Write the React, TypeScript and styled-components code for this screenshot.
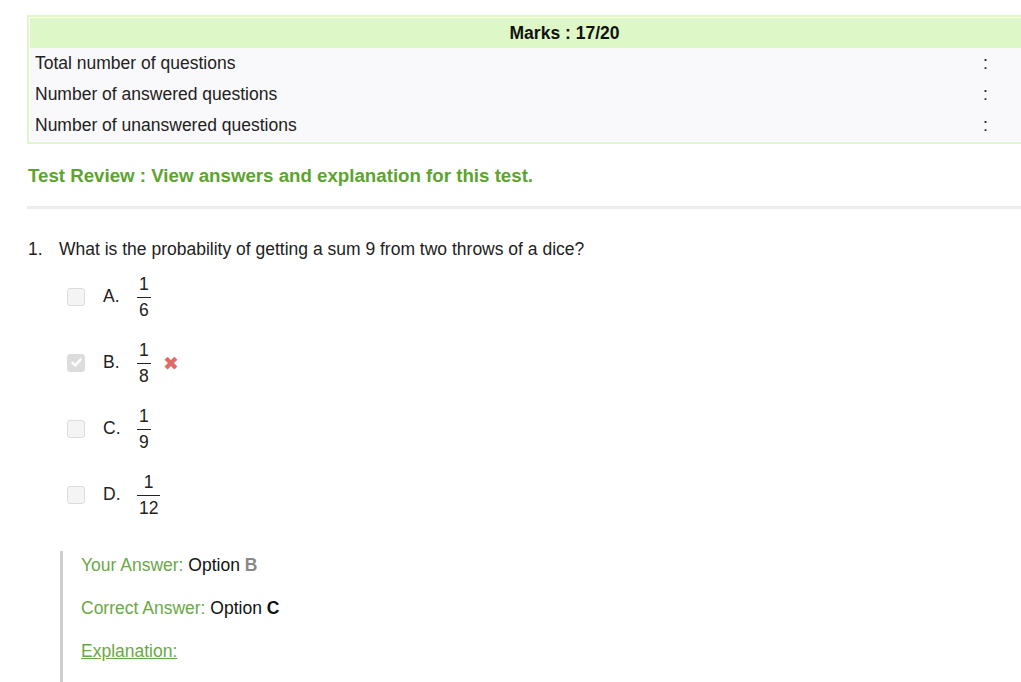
import React from "react";
import styled, { createGlobalStyle } from "styled-components";

const Global = createGlobalStyle`
  html, body { margin: 0; padding: 0; background: #fff; overflow: hidden; }
  body { font-family: "Liberation Sans", Arial, sans-serif; color: #111; }
`;

const Page = styled.div`
  width: 1021px;
  height: 682px;
  overflow: hidden;
  padding: 15px 0 0 27px;
  box-sizing: border-box;
`;

const ScoreTable = styled.div`
  width: 1075px;
  border: 2px solid #dff6cc;
  padding: 1px;
  box-sizing: border-box;
  display: flex;
  flex-direction: column;
`;

const HeaderRow = styled.div`
  height: 30px;
  background: #ddf7c6;
  display: flex;
  align-items: center;
  justify-content: center;
  font-weight: bold;
  font-size: 17.5px;
  color: #111;
`;

const StatRow = styled.div`
  height: 31px;
  background: #f9f9fb;
  display: grid;
  grid-template-columns: 948px 20px 1fr;
  align-items: center;
  font-size: 17.5px;
  color: #222;
  padding-left: 5px;
`;

const Heading = styled.h2`
  margin: 21px 0 0 1px;
  font-size: 18.7px;
  line-height: 22px;
  font-weight: bold;
  color: #5ca42f;
`;

const Rule = styled.div`
  height: 3px;
  background: #ececec;
  margin-top: 19px;
`;

const Question = styled.div`
  display: flex;
  margin: 30px 0 0 1px;
  font-size: 17.5px;
  line-height: 20px;
  color: #222;
`;

const QNum = styled.span`
  width: 31px;
`;

const Options = styled.div`
  display: flex;
  flex-direction: column;
  gap: 27px;
  margin: 18px 0 0 40px;
`;

const Option = styled.div`
  display: flex;
  align-items: center;
  height: 39px;
  font-size: 17.5px;
  color: #222;
`;

const Box = styled.span<{ $checked?: boolean }>`
  width: 18px;
  height: 18px;
  border: 1px solid #dcdcdc;
  border-radius: 3px;
  background: ${(p) => (p.$checked ? "#dcdcdc" : "#f4f4f4")};
  box-sizing: border-box;
  display: flex;
  align-items: center;
  justify-content: center;
  margin-right: 18px;
`;

const Letter = styled.span`
  width: 34px;
`;

const Frac = styled.span`
  display: inline-flex;
  flex-direction: column;
  align-items: center;
  font-size: 17.5px;
  line-height: 20px;
`;

const Num = styled.span`
  padding: 0 2px 3px;
  border-bottom: 1px solid #222;
  align-self: stretch;
  text-align: center;
`;

const Den = styled.span`
  padding: 2px 2px 0;
`;

const Cross = styled.span`
  color: #e06a6a;
  font-size: 19px;
  margin-left: 12px;
  margin-top: 2px;
`;

const AnswerBlock = styled.div`
  margin: 37px 0 0 33px;
  border-left: 3px solid #cfcfcf;
  padding: 4px 0 30px 18px;
  display: flex;
  flex-direction: column;
  gap: 22px;
  font-size: 17.5px;
  line-height: 21px;
`;

const Line = styled.div`
  color: #111;
`;

const Label = styled.span`
  color: #6aa847;
`;

const OptLetter = styled.b<{ $muted?: boolean }>`
  color: ${(p) => (p.$muted ? "#888" : "#111")};
`;

const ExplLink = styled.a`
  color: #6aa847;
  text-decoration: underline;
`;

const Check = () => (
  <svg width="13" height="13" viewBox="0 0 13 13">
    <path d="M2.5 6.8 L5.2 9.4 L10.5 3.6" fill="none" stroke="#fff" strokeWidth="2.4" strokeLinecap="round" strokeLinejoin="round" />
  </svg>
);

const options = [
  { l: "A.", n: "1", d: "6" },
  { l: "B.", n: "1", d: "8", checked: true, wrong: true },
  { l: "C.", n: "1", d: "9" },
  { l: "D.", n: "1", d: "12" },
];

export default function App() {
  return (
    <>
      <Global />
      <Page>
        <ScoreTable>
          <HeaderRow>Marks : 17/20</HeaderRow>
          <StatRow><span>Total number of questions</span><span>:</span><span /></StatRow>
          <StatRow><span>Number of answered questions</span><span>:</span><span /></StatRow>
          <StatRow><span>Number of unanswered questions</span><span>:</span><span /></StatRow>
        </ScoreTable>
        <Heading>Test Review : View answers and explanation for this test.</Heading>
        <Rule />
        <Question>
          <QNum>1.</QNum>
          <span>What is the probability of getting a sum 9 from two throws of a dice?</span>
        </Question>
        <Options>
          {options.map((o) => (
            <Option key={o.l}>
              <Box $checked={o.checked}>{o.checked && <Check />}</Box>
              <Letter>{o.l}</Letter>
              <Frac>
                <Num>{o.n}</Num>
                <Den>{o.d}</Den>
              </Frac>
              {o.wrong && <Cross>✖</Cross>}
            </Option>
          ))}
        </Options>
        <AnswerBlock>
          <Line><Label>Your Answer:</Label> Option <OptLetter $muted>B</OptLetter></Line>
          <Line><Label>Correct Answer:</Label> Option <OptLetter>C</OptLetter></Line>
          <Line><ExplLink href="#">Explanation:</ExplLink></Line>
        </AnswerBlock>
      </Page>
    </>
  );
}
